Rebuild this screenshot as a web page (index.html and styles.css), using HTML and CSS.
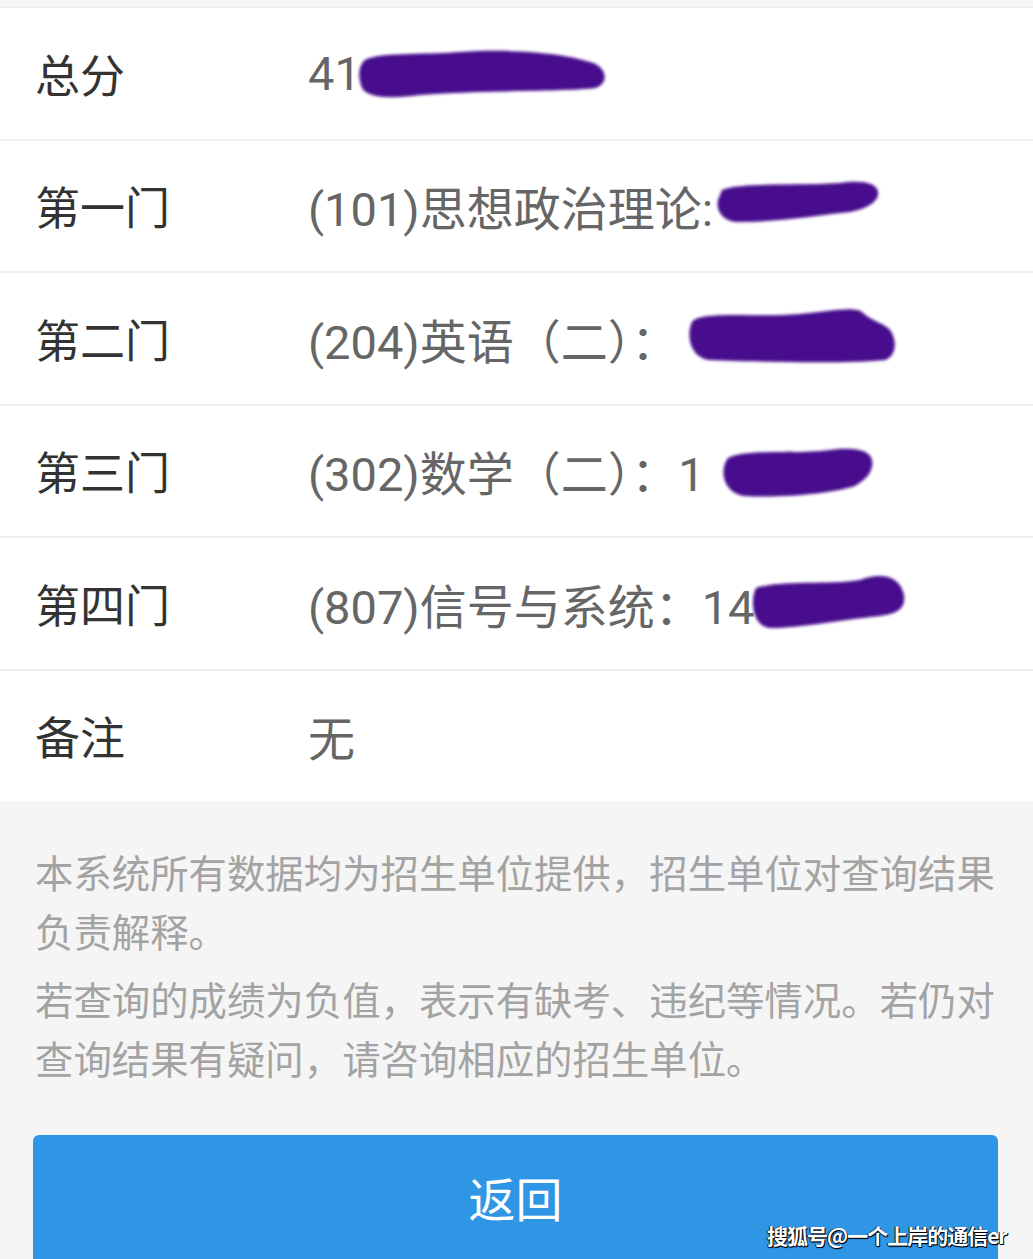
FILE: index.html
```html
<!DOCTYPE html>
<html lang="zh-CN">
<head>
<meta charset="utf-8">
<title>成绩查询</title>
<link rel="stylesheet" href="styles.css">
</head>
<body>
<div class="page">
  <div class="list">
    <div class="row"><div class="label">总分</div><div class="value">41</div></div>
    <div class="row"><div class="label">第一门</div><div class="value">(101)思想政治理论:</div></div>
    <div class="row"><div class="label">第二门</div><div class="value">(204)英语（二）：</div></div>
    <div class="row"><div class="label">第三门</div><div class="value">(302)数学（二）：1</div></div>
    <div class="row"><div class="label">第四门</div><div class="value">(807)信号与系统：14</div></div>
    <div class="row last"><div class="label">备注</div><div class="value">无</div></div>
  </div>
  <div class="notes">
    <p>本系统所有数据均为招生单位提供，招生单位对查询结果负责解释。</p>
    <p>若查询的成绩为负值，表示有缺考、违纪等情况。若仍对查询结果有疑问，请咨询相应的招生单位。</p>
  </div>
  <div class="btn">返回</div>
  <svg class="scribbles" width="1033" height="810" viewBox="0 0 1033 810" xmlns="http://www.w3.org/2000/svg">
    <defs>
      <filter id="soft" x="-5%" y="-20%" width="110%" height="140%">
        <feGaussianBlur stdDeviation="1.6"/>
      </filter>
    </defs>
    <g fill="#47088d" filter="url(#soft)">
      <path d="M365,60 C380,52 420,55 460,52 C520,48 570,55 590,62 C607,66 610,84 595,88 C560,92 480,90 420,95 C390,99 368,98 362,88 C358,78 358,66 365,60 Z"/>
      <path d="M722,190 C740,182 800,186 840,183 C860,180 880,182 878,195 C876,205 860,210 850,212 C820,215 780,222 740,222 C722,222 716,210 718,200 Z"/>
      <path d="M692,322 C700,310 760,318 800,314 C830,311 855,306 862,312 C870,320 880,322 888,328 C897,336 898,356 885,360 C850,364 760,362 710,360 C690,358 686,335 692,322 Z"/>
      <path d="M728,458 C745,448 790,455 830,450 C860,446 875,452 872,466 C870,478 860,482 855,486 C830,494 780,498 745,496 C725,494 718,472 728,458 Z"/>
      <path d="M756,588 C780,580 830,585 860,580 C880,572 900,575 904,595 C906,610 895,614 880,616 C840,620 800,628 770,628 C752,626 750,600 756,588 Z"/>
    </g>
  </svg>
  <div class="watermark">搜狐号@一个上岸的通信er</div>
</div>
</body>
</html>
```
FILE: styles.css
```css
html, body {
  margin: 0;
  padding: 0;
  background: #f5f5f5;
}
body {
  font-family: "Roboto", "Noto Sans CJK SC", sans-serif;
  overflow: hidden;
}
.page {
  position: relative;
  width: 1033px;
  height: 1259px;
  overflow: hidden;
  padding-top: 7px;
  box-sizing: border-box;
}
.list {
  background: #fff;
  border-top: 1px solid #ececec;
}
.row {
  display: flex;
  align-items: center;
  height: 130.5px;
  border-bottom: 2px solid #efefef;
  box-sizing: content-box;
}
.row.last {
  border-bottom: none;
}
.label {
  width: 273px;
  padding-left: 35px;
  font-size: 45px;
  color: #333;
  font-family: "Noto Sans CJK SC", sans-serif;
}
.value {
  font-size: 47px;
  color: #666;
}
.notes {
  padding: 41px 33px 0 35px;
  color: #a3a3a3;
  font-size: 38.4px;
  line-height: 59px;
  font-family: "Noto Sans CJK SC", sans-serif;
}
.notes p {
  margin: 0 0 9px 0;
}
.btn {
  margin: 48px 35px 0 33px;
  height: 160px;
  box-sizing: border-box;
  padding-top: 33px;
  background: #2f95e5;
  border-radius: 6px;
  color: #fff;
  font-size: 47px;
  line-height: 58px;
  text-align: center;
  font-family: "Noto Sans CJK SC", sans-serif;
}
.scribbles {
  position: absolute;
  left: 0;
  top: 0;
  pointer-events: none;
}
.watermark {
  position: absolute;
  left: 767px;
  top: 1220px;
  color: #fff;
  font-size: 21px;
  font-weight: 700;
  letter-spacing: -1px;
  font-family: "Noto Sans CJK SC", sans-serif;
  text-shadow: 1px 1px 0 #000, -1px 0 0 #222, 0 1px 1px #000;
}
```
